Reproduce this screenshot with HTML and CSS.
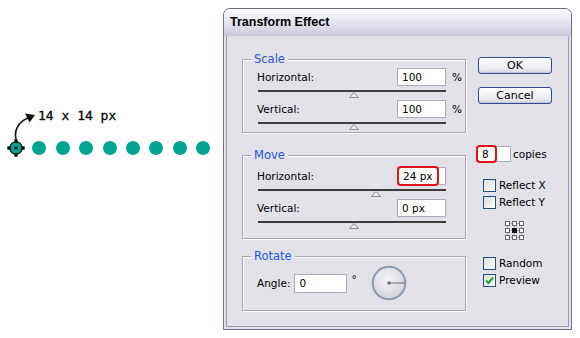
FILE: index.html
```html
<!DOCTYPE html>
<html lang="en">
<head>
  <meta charset="UTF-8" />
  <title>Transform Effect</title>
  <link rel="stylesheet" href="styles.css">
</head>
<body>
  <div class="page">
    <div class="sample">
      <div class="size-note">
        <svg class="arrow" width="27" height="31" viewBox="0 0 27 31">
          <path d="M7 29 C5 21 9 12 19 8" fill="none" stroke="#111" stroke-width="1.6" stroke-linecap="round"/>
          <path d="M26 5 L16 3.5 L20.5 12.5 Z" fill="#111"/>
        </svg>
        <span>14 x 14 px</span>
      </div>
      <div class="dots">
        <svg class="dot-selected" width="14" height="14" viewBox="0 0 14 14">
          <circle cx="7" cy="7" r="6.2" fill="#00a592" stroke="#111" stroke-width="1.3"/>
          <rect x="5.3" y="-1.7" width="3.4" height="3.4" fill="#111"/>
          <rect x="5.3" y="12.3" width="3.4" height="3.4" fill="#111"/>
          <rect x="-1.7" y="5.3" width="3.4" height="3.4" fill="#111"/>
          <rect x="12.3" y="5.3" width="3.4" height="3.4" fill="#111"/>
          <rect x="5.5" y="5.5" width="3" height="3" fill="#111"/>
        </svg>
        <span class="dot"></span>
        <span class="dot"></span>
        <span class="dot"></span>
        <span class="dot"></span>
        <span class="dot"></span>
        <span class="dot"></span>
        <span class="dot"></span>
        <span class="dot"></span>
      </div>
    </div>

    <div class="dialog">
      <div class="titlebar">Transform Effect</div>
      <div class="dialog-body">
        <div class="groups">
          <fieldset class="group scale">
            <legend>Scale</legend>
            <div class="field"><span class="label">Horizontal:</span><span class="box">100</span><span class="unit">%</span></div>
            <div class="slider"><svg class="thumb" style="--pos:51%" width="10" height="6" viewBox="0 0 10 6"><path d="M5 .6 L9.4 5.4 H.6 Z" fill="#f3f3f5" stroke="#8a8a8a"/></svg></div>
            <div class="field"><span class="label">Vertical:</span><span class="box">100</span><span class="unit">%</span></div>
            <div class="slider"><svg class="thumb" style="--pos:51%" width="10" height="6" viewBox="0 0 10 6"><path d="M5 .6 L9.4 5.4 H.6 Z" fill="#f3f3f5" stroke="#8a8a8a"/></svg></div>
          </fieldset>

          <fieldset class="group move">
            <legend>Move</legend>
            <div class="field"><span class="label">Horizontal:</span><span class="box"><span class="hl">24 px</span></span><span class="unit"></span></div>
            <div class="slider"><svg class="thumb" style="--pos:63%" width="10" height="6" viewBox="0 0 10 6"><path d="M5 .6 L9.4 5.4 H.6 Z" fill="#f3f3f5" stroke="#8a8a8a"/></svg></div>
            <div class="field"><span class="label">Vertical:</span><span class="box">0 px</span><span class="unit"></span></div>
            <div class="slider"><svg class="thumb" style="--pos:51%" width="10" height="6" viewBox="0 0 10 6"><path d="M5 .6 L9.4 5.4 H.6 Z" fill="#f3f3f5" stroke="#8a8a8a"/></svg></div>
          </fieldset>

          <fieldset class="group rotate">
            <legend>Rotate</legend>
            <div class="angle-row">
              <span>Angle:</span>
              <span class="box angle">0</span>
              <span class="deg">°</span>
              <svg class="dial" width="36" height="36" viewBox="0 0 36 36">
                <defs>
                  <radialGradient id="dialFill" cx="45%" cy="40%" r="60%">
                    <stop offset="0" stop-color="#f6f6f8"/>
                    <stop offset="1" stop-color="#d2d2da"/>
                  </radialGradient>
                </defs>
                <circle cx="18" cy="18" r="16.3" fill="url(#dialFill)" stroke="#8e9ab0" stroke-width="2"/>
                <line x1="18" y1="18" x2="34" y2="18" stroke="#6e6e6e" stroke-width="1"/>
                <rect x="16.5" y="16.5" width="3" height="3" fill="#6e6e6e"/>
              </svg>
            </div>
          </fieldset>
        </div>

        <div class="side">
          <button class="btn ok">OK</button>
          <button class="btn cancel">Cancel</button>
          <div class="copies">
            <span class="box short"><span class="hl">8</span></span>
            <span>copies</span>
          </div>
          <label class="check first"><span class="tick"></span>Reflect X</label>
          <label class="check"><span class="tick"></span>Reflect Y</label>
          <svg class="ref-point" width="19" height="19" viewBox="0 0 19 19">
            <path d="M2.5 2.5 H16.5 V16.5 H2.5 Z M9.5 2.5 V16.5 M2.5 9.5 H16.5" fill="none" stroke="#777" stroke-dasharray="1 1"/>
            <g fill="#fff" stroke="#666">
              <rect x="0.5" y="0.5" width="4" height="4"/>
              <rect x="7.5" y="0.5" width="4" height="4"/>
              <rect x="14.5" y="0.5" width="4" height="4"/>
              <rect x="0.5" y="7.5" width="4" height="4"/>
              <rect x="14.5" y="7.5" width="4" height="4"/>
              <rect x="0.5" y="14.5" width="4" height="4"/>
              <rect x="7.5" y="14.5" width="4" height="4"/>
              <rect x="14.5" y="14.5" width="4" height="4"/>
            </g>
            <rect x="7" y="7" width="5" height="5" fill="#111"/>
          </svg>
          <label class="check first"><span class="tick"></span>Random</label>
          <label class="check"><span class="tick"><svg width="11" height="11" viewBox="0 0 11 11"><path d="M2 5.5 L4.5 8 L9 2.5" fill="none" stroke="#21a121" stroke-width="2"/></svg></span>Preview</label>
        </div>
      </div>
    </div>
  </div>
</body>
</html>
```

FILE: styles.css
```css
body {
  margin: 0;
  background: #fff;
  font-family: "DejaVu Sans", sans-serif;
  font-size: 10.5px;
  color: #000;
}
.page {
  display: flex;
}
.sample {
  width: 223px;
  flex: none;
  box-sizing: border-box;
  padding: 110px 0 0 9px;
}
.size-note {
  display: flex;
  align-items: flex-start;
  height: 31px;
}
.size-note span {
  font-family: "DejaVu Sans Mono", monospace;
  font-size: 13px;
  line-height: 14px;
  margin: -1px 0 0 2px;
  -webkit-text-stroke: 0.3px #111;
}
.dots {
  display: flex;
  align-items: center;
  gap: 9.4px;
}
.dot {
  width: 14px;
  height: 14px;
  border-radius: 50%;
  background: #00a592;
}
.dot-selected {
  overflow: visible;
}

.dialog {
  width: 349px;
  height: 322px;
  margin-top: 8px;
  box-sizing: border-box;
  border: 1px solid #6c6c86;
  border-radius: 7px 7px 0 0;
  background: #e2e1e8;
  display: flex;
  flex-direction: column;
}
.titlebar {
  height: 27px;
  flex: none;
  padding-left: 6px;
  border-radius: 6px 6px 0 0;
  background: linear-gradient(#fbfbfd, #e2e2ec 55%, #c9c9da);
  font: bold 12.5px "Liberation Sans", sans-serif;
  line-height: 27px;
}
.dialog-body {
  flex: 1;
  margin: 0 2px 2px;
  border: 1px solid #9b9bb0;
  border-top: 0;
  padding: 16px 0 0 15px;
  display: grid;
  grid-template-columns: 224px 1fr;
  column-gap: 10px;
  align-items: start;
}

.group {
  margin: 0;
  box-sizing: border-box;
  width: 224px;
  min-width: 0;
  border: 1px solid #a7a7b6;
  box-shadow: 1px 1px 0 #fbfbfd, inset 1px 1px 0 #fbfbfd;
  padding: 2px 4px 0 14px;
}
.group legend {
  margin-left: -6px;
  padding: 0 3px;
  background: #e2e1e8;
  color: #2458d8;
  font-size: 11.5px;
  line-height: 14px;
}
.move {
  margin-top: 15px;
  padding-top: 5px;
  padding-bottom: 7px;
}
.rotate {
  margin-top: 10px;
  padding-top: 3px;
  padding-bottom: 10px;
}
.field {
  display: flex;
  align-items: center;
  height: 18px;
}
.field .label {
  flex: 1;
}
.box {
  box-sizing: border-box;
  display: flex;
  align-items: center;
  width: 49px;
  height: 18px;
  padding-left: 4px;
  background: #fff;
  border: 1px solid #a9adb8;
}
.unit {
  width: 15px;
  padding-left: 6px;
  box-sizing: border-box;
}
.hl {
  box-sizing: border-box;
  display: flex;
  align-items: center;
  height: calc(100% + 4px);
  margin: -2px 0 -2px -5px;
  padding: 0 4px;
  border: 2px solid #e3101b;
  border-radius: 4px;
  background: #fff;
}
.slider {
  margin: 4px 15px 0 1px;
  border-top: 2px solid #3c3c3c;
  height: 8px;
}
.thumb {
  display: block;
  margin-left: calc(var(--pos) - 5px);
}
.angle-row {
  display: flex;
  align-items: center;
  height: 34px;
}
.box.angle {
  width: 53px;
  height: 19px;
  margin-left: 4px;
}
.deg {
  align-self: flex-start;
  margin: 7px 0 0 4px;
}
.dial {
  margin-left: 14px;
}

.side {
  display: flex;
  flex-direction: column;
  align-items: flex-start;
}
.btn {
  width: 74px;
  height: 17px;
  margin: 5px 0 0 2px;
  padding: 0;
  border: 1px solid #2f4f8f;
  border-radius: 3px;
  background: linear-gradient(#ffffff, #ececf2 70%, #d6d6e0);
  box-shadow: inset 0 -1px 0 #c4c4d4;
  font: 11px "DejaVu Sans", sans-serif;
  color: #000;
}
.btn.cancel {
  margin-top: 13px;
}
.copies {
  display: flex;
  align-items: center;
  margin-top: 42px;
}
.box.short {
  width: 35px;
  height: 16px;
  padding-left: 0;
}
.box.short .hl {
  margin-left: -1px;
  padding: 0 6px 0 4px;
}
.copies span:last-child {
  margin-left: 2px;
}
.check {
  display: flex;
  align-items: center;
  margin: 4px 0 0 7px;
  line-height: 13px;
}
.check.first {
  margin-top: 17px;
}
.tick {
  box-sizing: border-box;
  width: 13px;
  height: 13px;
  margin-right: 3px;
  border: 1px solid #1c5180;
  background: linear-gradient(135deg, #dcdcd7, #ffffff);
  display: flex;
  align-items: center;
  justify-content: center;
}
.ref-point {
  margin: 12px 0 0 29px;
}
```
